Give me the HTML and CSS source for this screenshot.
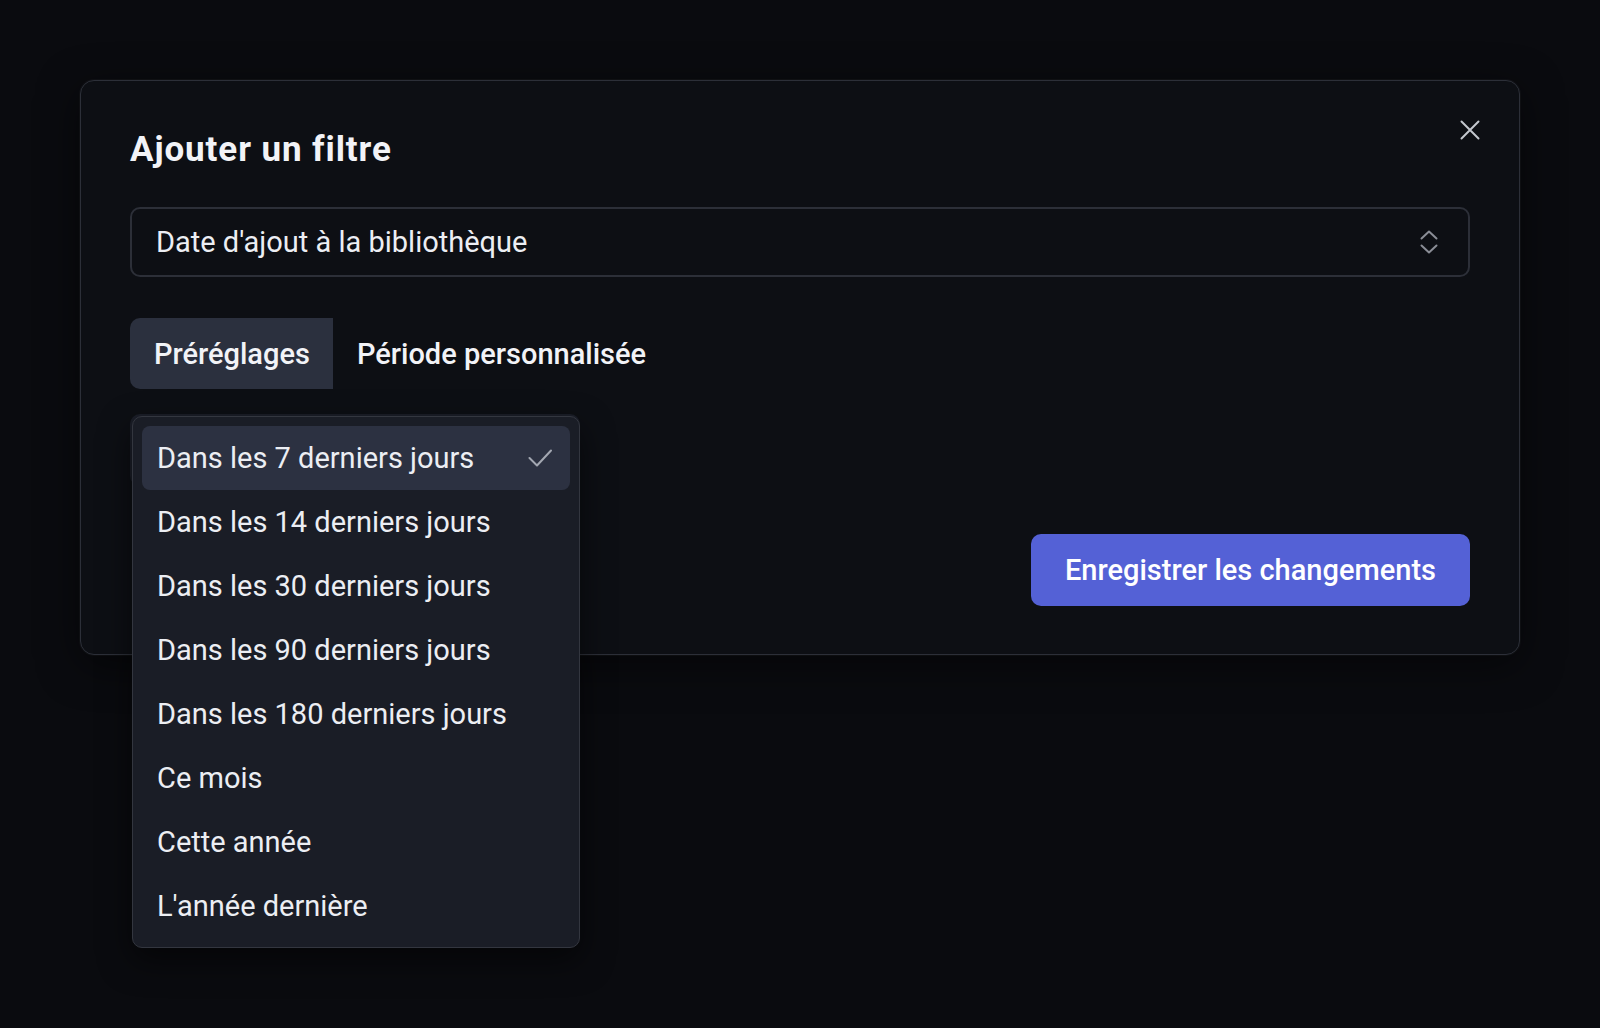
FILE: index.html
```html
<!DOCTYPE html>
<html lang="fr">
<head>
    <meta charset="UTF-8">
    <meta name="viewport" content="width=device-width, initial-scale=1.0">
    <title>Ajouter un filtre</title>
    <link rel="stylesheet" href="styles.css">
</head>
<body>
    <div class="page">
        <div class="modal">
            <button class="modal-close" type="button" aria-label="Fermer">
                <svg width="20" height="20" viewBox="0 0 20 20" fill="none" stroke="currentColor" stroke-width="2" stroke-linecap="round">
                    <path d="M1.5 1.5L18.5 18.5M18.5 1.5L1.5 18.5"/>
                </svg>
            </button>

            <h2 class="modal-title">Ajouter un filtre</h2>

            <div class="field-select">
                <span>Date d'ajout à la bibliothèque</span>
                <svg class="field-chevrons" width="18" height="24" viewBox="0 0 18 24" fill="none" stroke="currentColor" stroke-width="2" stroke-linecap="round" stroke-linejoin="round">
                    <path d="M1.5 8.5L9 1.5L16.5 8.5"/>
                    <path d="M1.5 15.5L9 22.5L16.5 15.5"/>
                </svg>
            </div>

            <div class="tabs">
                <button class="tab active" type="button">Préréglages</button>
                <button class="tab" type="button">Période personnalisée</button>
            </div>

            <div class="preset-picker">
                <div class="preset-trigger"></div>
                <ul class="preset-menu">
                    <li class="preset-item selected">
                        <span>Dans les 7 derniers jours</span>
                        <svg class="check" width="24" height="18" viewBox="0 0 24 18" fill="none" stroke="currentColor" stroke-width="2" stroke-linecap="round" stroke-linejoin="round">
                            <path d="M1.5 9L9 16.5L23 1.5"/>
                        </svg>
                    </li>
                    <li class="preset-item"><span>Dans les 14 derniers jours</span></li>
                    <li class="preset-item"><span>Dans les 30 derniers jours</span></li>
                    <li class="preset-item"><span>Dans les 90 derniers jours</span></li>
                    <li class="preset-item"><span>Dans les 180 derniers jours</span></li>
                    <li class="preset-item"><span>Ce mois</span></li>
                    <li class="preset-item"><span>Cette année</span></li>
                    <li class="preset-item"><span>L'année dernière</span></li>
                </ul>
            </div>

            <div class="modal-footer">
                <button class="btn-primary" type="button">Enregistrer les changements</button>
            </div>
        </div>
    </div>
</body>
</html>
```

FILE: styles.css
```css
/* Base */
* {
    box-sizing: border-box;
}

html, body {
    margin: 0;
    min-height: 100%;
    background-color: #0a0b0f;
}

body {
    color: #eceef3;
    font-family: Roboto, "Noto Sans", Arial, sans-serif;
}

button {
    font-family: inherit;
    border: none;
    background: none;
    color: inherit;
    padding: 0;
    cursor: pointer;
}

.page {
    min-height: 1028px;
    padding: 80px;
}

/* Modal */
.modal {
    position: relative;
    background-color: #0d0f14;
    border: 1px solid #2c2f38;
    border-radius: 14px;
    padding: 49px 49px 48px;
    box-shadow: 0 0 0 1px rgba(255, 255, 255, 0.03), 0 10px 40px rgba(0, 0, 0, 0.5);
}

.modal-close {
    position: absolute;
    top: 39px;
    right: 39px;
    width: 20px;
    height: 20px;
    color: #c4c7cf;
    display: flex;
}

.modal-title {
    margin: 0;
    font-size: 35px;
    line-height: 40px;
    font-weight: 700;
    letter-spacing: 0.9px;
    color: #f2f3f7;
}

/* Select */
.field-select {
    margin-top: 37px;
    height: 70px;
    border: 2px solid #2c2f38;
    border-radius: 10px;
    padding: 0 30px 0 24px;
    display: flex;
    align-items: center;
    justify-content: space-between;
    font-size: 29px;
    color: #eceef3;
}

.field-chevrons {
    color: #8a8d96;
}

/* Tabs */
.tabs {
    margin-top: 41px;
    display: flex;
}

.tab {
    height: 71px;
    padding: 0 23px 0 24px;
    font-size: 29px;
    font-weight: 500;
    color: #f2f3f7;
}

.tab.active {
    background-color: #2b303e;
    border-radius: 10px 0 0 10px;
}

/* Preset picker */
.preset-picker {
    position: relative;
    margin-top: 25px;
}

.preset-trigger {
    width: 450px;
    height: 72px;
    border-radius: 10px;
    background-color: #1b1e28;
}

.preset-menu {
    position: absolute;
    top: 2px;
    left: 2px;
    width: 448px;
    margin: 0;
    padding: 9px;
    list-style: none;
    background-color: #1a1d26;
    border: 1px solid #33363f;
    border-radius: 10px;
    box-shadow: 0 12px 32px rgba(0, 0, 0, 0.55);
    z-index: 2;
}

.preset-item {
    height: 64px;
    padding: 0 18px 0 15px;
    display: flex;
    align-items: center;
    justify-content: space-between;
    font-size: 29px;
    color: #eceef3;
    border-radius: 8px;
}

.preset-item.selected {
    background-color: #2c3141;
}

.check {
    color: #a3a7b1;
}

/* Footer */
.modal-footer {
    margin-top: 48px;
    display: flex;
    justify-content: flex-end;
}

.btn-primary {
    height: 72px;
    padding: 0 34px;
    border-radius: 10px;
    background-color: #5461d6;
    color: #ffffff;
    font-size: 29px;
    font-weight: 500;
}
```
